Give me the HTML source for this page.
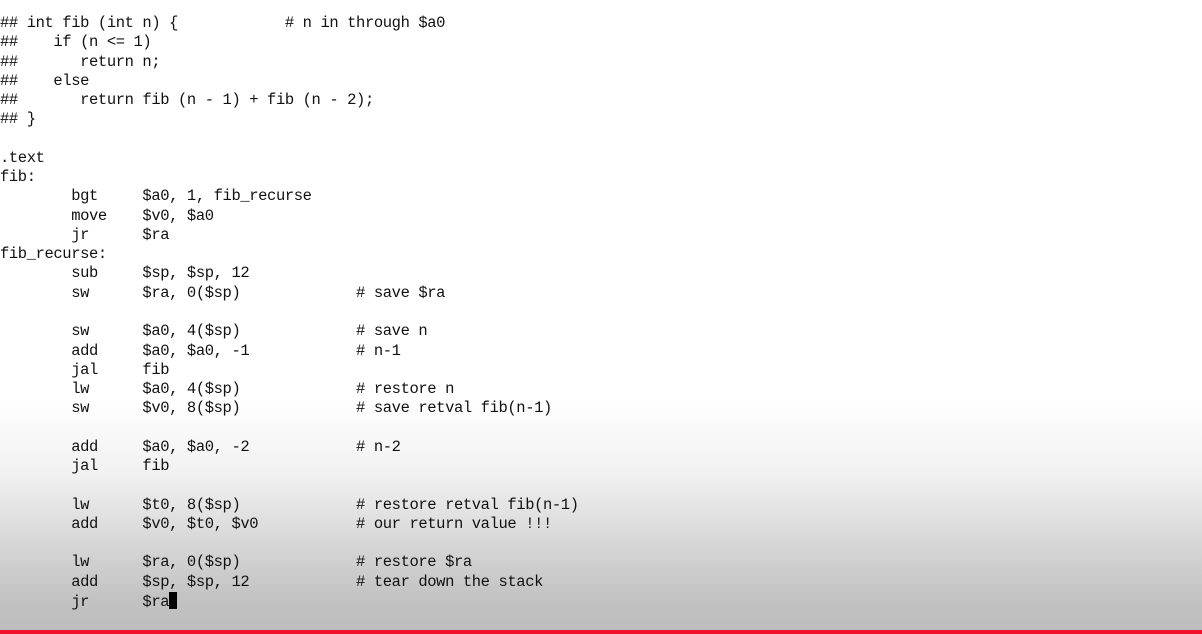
<!DOCTYPE html>
<html><head><style>
html,body{margin:0;padding:0}
body{width:1202px;height:634px;overflow:hidden;position:relative;background:linear-gradient(to bottom,#fff 0,#fff 400px,#f2f2f2 470px,#d8d8d8 540px,#c2c2c2 600px,#bdbdbd 630px);}
pre{position:absolute;left:0;top:14px;margin:0;font-family:"Liberation Mono",monospace;font-size:15.5px;letter-spacing:-0.4px;line-height:19.27px;color:#111;}
.cur{display:inline-block;width:8px;height:17px;background:#000;vertical-align:-3px}
.red{position:absolute;left:0;right:0;top:630px;height:4px;background:#f0102a}
</style></head><body>
<pre>## int fib (int n) {            # n in through $a0
##    if (n &lt;= 1)
##       return n;
##    else
##       return fib (n - 1) + fib (n - 2);
## }

.text
fib:
        bgt     $a0, 1, fib_recurse
        move    $v0, $a0
        jr      $ra
fib_recurse:
        sub     $sp, $sp, 12
        sw      $ra, 0($sp)             # save $ra

        sw      $a0, 4($sp)             # save n
        add     $a0, $a0, -1            # n-1
        jal     fib
        lw      $a0, 4($sp)             # restore n
        sw      $v0, 8($sp)             # save retval fib(n-1)

        add     $a0, $a0, -2            # n-2
        jal     fib

        lw      $t0, 8($sp)             # restore retval fib(n-1)
        add     $v0, $t0, $v0           # our return value !!!

        lw      $ra, 0($sp)             # restore $ra
        add     $sp, $sp, 12            # tear down the stack
        jr      $ra<span class="cur"></span></pre>
<div class="red"></div>
</body></html>
